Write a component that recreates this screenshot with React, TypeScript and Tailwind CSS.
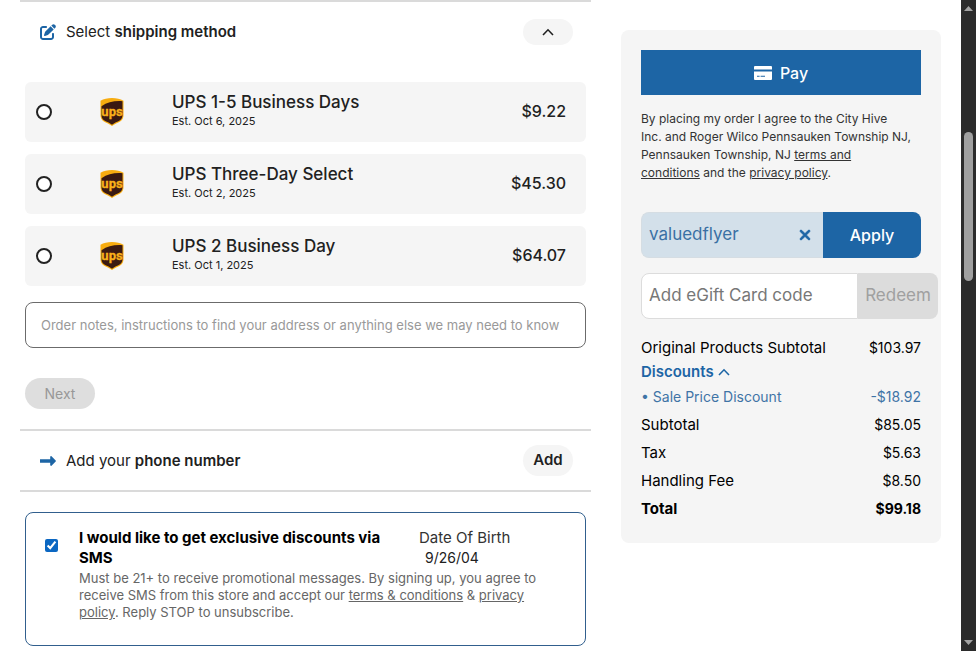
import { useState } from "react";
import { FaPenToSquare, FaXmark } from "react-icons/fa6";

// ── Data ───────────────────────────────────────────────

const SHIPPING_OPTIONS = [
  { id: "ground", name: "UPS 1-5 Business Days", estimate: "Est. Oct 6, 2025", price: "$9.22" },
  { id: "three-day", name: "UPS Three-Day Select", estimate: "Est. Oct 2, 2025", price: "$45.30" },
  { id: "two-day", name: "UPS 2 Business Day", estimate: "Est. Oct 1, 2025", price: "$64.07" },
];

const FEES = [
  { label: "Subtotal", amount: "$85.05" },
  { label: "Tax", amount: "$5.63" },
  { label: "Handling Fee", amount: "$8.50" },
];

// ── Icons ──────────────────────────────────────────────

function ChevronUp({ className }: { className: string }) {
  return (
    <svg viewBox="0 0 12 8" fill="none" stroke="currentColor" className={className} aria-hidden="true">
      <path d="M1 7 6 1.8 11 7" strokeWidth="1.6" />
    </svg>
  );
}

function ArrowRight({ className }: { className: string }) {
  return (
    <svg viewBox="0 0 16 16" fill="currentColor" className={className} aria-hidden="true">
      <path d="M.4 6.200h9.800V3.900c0-.7.8-1 1.300-.6l4.200 4.100c.3.300.3.900 0 1.200l-4.200 4.100c-.5.400-1.300.1-1.300-.6V9.800H.4a.4.4 0 0 1-.4-.4V6.600c0-.2.2-.4.4-.4Z" />
    </svg>
  );
}

function CardIcon() {
  return (
    <svg viewBox="0 0 18 14" className="h-3.5 w-[18px]" aria-hidden="true">
      <path fill="currentColor" d="M1 0h16a1 1 0 0 1 1 1v2.6H0V1a1 1 0 0 1 1-1Z" />
      <path
        fill="currentColor"
        fillRule="evenodd"
        d="M0 5.6h18V13a1 1 0 0 1-1 1H1a1 1 0 0 1-1-1Zm3 4.2v1h2.6v-1Zm3.6 0v1H11v-1Z"
      />
    </svg>
  );
}

function UpsLogo() {
  return (
    <svg viewBox="0 0 24 29" className="h-[29px] w-6" role="img" aria-label="UPS">
      <path
        fill="#f7ac10"
        d="M12 0C7.500 0 3.600.9.500 2.700V17c0 3 1 4.900 3.400 6.400C6.200 24.900 9.600 25.900 12 28c2.400-2.100 5.800-3.100 8.100-4.600 2.400-1.500 3.400-3.400 3.400-6.400V2.700C20.400.9 16.500 0 12 0Z"
      />
      <path
        fill="#3a1a12"
        d="M1.500 8.300C7.500 3.900 14.500 2.700 22.500 3.200V17c0 2.600-.9 4.200-2.900 5.500-2.100 1.400-5.200 2.200-7.600 4.200-2.400-2-5.500-2.800-7.600-4.200-2-1.300-2.900-2.900-2.900-5.500Z"
      />
      <text
        x="12"
        y="18"
        textAnchor="middle"
        fill="#f9b01a"
        stroke="#f9b01a"
        strokeWidth="0.3"
        fontFamily="Roboto, sans-serif"
        fontWeight="700"
        fontSize="13"
      >
        ups
      </text>
    </svg>
  );
}

// ── Shipping ───────────────────────────────────────────

function ShippingSection() {
  const [selected, setSelected] = useState("");

  return (
    <section className="border-t-2 border-[#dadada] pb-5">
      <div className="flex items-center py-[17px] pr-[18px] pl-5">
        <FaPenToSquare className="mr-2.5 size-4 text-[#1d65a5]" />
        <h2 className="flex-1 text-[15px] leading-5">
          Select <b className="font-semibold">shipping method</b>
        </h2>
        <button
          aria-label="Collapse shipping method"
          className="flex h-[26px] w-[50px] items-center justify-center rounded-full bg-[#f5f5f5]"
        >
          <ChevronUp className="h-2 w-3" />
        </button>
      </div>

      <div className="mx-[5px] mt-5 flex flex-col gap-3">
        {SHIPPING_OPTIONS.map((option) => (
          <label key={option.id} className="flex h-[60px] items-center rounded-md bg-[#f5f5f5] pr-5 pl-[11px]">
            <input
              type="radio"
              name="shipping"
              checked={selected === option.id}
              onChange={() => setSelected(option.id)}
              className="size-4 appearance-none rounded-full border-2 border-[#222] bg-white checked:border-4 checked:border-[#1d65a5]"
            />
            <span className="mx-12">
              <UpsLogo />
            </span>
            <span className="flex-1 pb-0.5">
              <span className="block text-[17px] leading-5 font-medium">{option.name}</span>
              <span className="block text-[11px] leading-[18px]">{option.estimate}</span>
            </span>
            <span className="pb-0.5 text-base leading-5 font-medium">{option.price}</span>
          </label>
        ))}
      </div>

      <div className="mx-[5px] mt-4">
        <input
          type="text"
          aria-label="Order notes"
          placeholder="Order notes, instructions to find your address or anything else we may need to know"
          className="block h-[46px] w-full rounded-lg border border-[#6b6b6b] bg-white px-[15px] text-[13px] placeholder:text-[#999]"
        />
        <button disabled className="mt-[30px] h-[31px] w-[70px] rounded-full bg-[#dedede] text-sm text-[#989898]">
          Next
        </button>
      </div>
    </section>
  );
}

function PhoneSection() {
  return (
    <section className="flex items-center border-y-2 border-[#dadada] py-3.5 pr-[18px] pl-5">
      <ArrowRight className="mr-2.5 size-4 text-[#1d65a5]" />
      <h2 className="flex-1 text-[15px] leading-5">
        Add your <b className="font-semibold">phone number</b>
      </h2>
      <button className="h-[31px] w-[50px] rounded-full bg-[#f5f5f5] text-[15px] font-semibold">Add</button>
    </section>
  );
}

function SmsConsent() {
  const [checked, setChecked] = useState(true);

  return (
    <section className="mx-[5px] mt-5 flex h-[134px] rounded-lg border border-[#315f8d] px-[19px] pt-[15px]">
      <input
        id="sms"
        type="checkbox"
        checked={checked}
        onChange={(e) => setChecked(e.target.checked)}
        className="mt-[11px] mr-[21px] size-[13px] shrink-0 accent-[#0b67c2]"
      />
      <div>
        <div className="flex">
          <label htmlFor="sms" className="w-[340px] pr-5 text-[15px] leading-5 font-bold text-black">
            I would like to get exclusive discounts via SMS
          </label>
          <div className="flex flex-col">
            <label htmlFor="dob" className="text-[15px] leading-5 text-[#333]">
              Date Of Birth
            </label>
            <input id="dob" type="text" defaultValue="9/26/04" className="h-5 w-24 px-1.5 text-sm leading-5" />
          </div>
        </div>
        <p className="mt-0.5 text-[13px] leading-[17px] text-[#666]">
          Must be 21+ to receive promotional messages. By signing up, you agree to receive SMS from this store and
          accept our{" "}
          <a href="#terms" className="underline">
            terms &amp; conditions
          </a>{" "}
          &amp;{" "}
          <a href="#privacy" className="underline">
            privacy policy
          </a>
          . Reply STOP to unsubscribe.
        </p>
      </div>
    </section>
  );
}

// ── Order summary ──────────────────────────────────────

function Totals() {
  const [open, setOpen] = useState(true);

  return (
    <table className="mt-4 w-full text-sm leading-5 text-black">
      <tbody>
        <tr className="h-[26px]">
          <th className="text-left text-[15px] font-normal">Original Products Subtotal</th>
          <td className="text-right">$103.97</td>
        </tr>
        <tr className="h-[22px]">
          <th colSpan={2} className="text-left">
            <button
              onClick={() => setOpen((v) => !v)}
              className="flex items-center gap-1 text-[15px] font-semibold text-[#1d65a5]"
            >
              Discounts <ChevronUp className="h-2 w-3" />
            </button>
          </th>
        </tr>
        {open && (
          <tr className="h-7 text-[#3f74a6]">
            <th className="text-left font-normal">• Sale Price Discount</th>
            <td className="text-right">-$18.92</td>
          </tr>
        )}
        {FEES.map((fee) => (
          <tr key={fee.label} className="h-7">
            <th className="text-left text-[15px] font-normal">{fee.label}</th>
            <td className="text-right">{fee.amount}</td>
          </tr>
        ))}
        <tr className="h-7 font-bold">
          <th className="text-left text-[15px]">Total</th>
          <td className="text-right">$99.18</td>
        </tr>
      </tbody>
    </table>
  );
}

function OrderSummary() {
  const [coupon, setCoupon] = useState("valuedflyer");

  return (
    <aside className="mt-[30px] w-80 shrink-0 self-start rounded-lg bg-[#f5f5f5] p-5">
      <button className="flex h-[45px] w-full items-center justify-center gap-2 bg-[#1d65a5] text-base font-medium text-white">
        <CardIcon />
        Pay
      </button>
      <p className="mt-[15px] text-xs leading-[18px] text-[#333]">
        By placing my order I agree to the City Hive
        <br />
        Inc. and Roger Wilco Pennsauken Township NJ,
        <br />
        Pennsauken Township, NJ{" "}
        <a href="#terms" className="underline">
          terms and
          <br />
          conditions
        </a>{" "}
        and the{" "}
        <a href="#privacy" className="underline">
          privacy policy
        </a>
        .
      </p>

      <div className="mt-[30px] flex h-[46px]">
        <div className="flex min-w-0 flex-1 items-center rounded-l-lg border border-r-0 border-[#d5dde3] bg-[#d3e0ea] pr-2.5 pl-[7px]">
          <input
            type="text"
            aria-label="Coupon code"
            value={coupon}
            onChange={(e) => setCoupon(e.target.value)}
            className="min-w-0 flex-1 bg-transparent text-[17px] text-[#3a70a4]"
          />
          <button aria-label="Clear coupon" onClick={() => setCoupon("")} className="text-[#1d65a5]">
            <FaXmark className="size-4 stroke-current stroke-[24px]" />
          </button>
        </div>
        <button className="w-[98px] rounded-r-lg bg-[#1d65a5] text-base font-medium text-white">Apply</button>
      </div>

      <div className="mt-[15px] -mr-[17px] flex h-[46px]">
        <input
          type="text"
          aria-label="eGift Card code"
          placeholder="Add eGift Card code"
          className="min-w-0 flex-1 rounded-l-lg border border-[#dcdcdc] bg-white px-[7px] text-[17px] placeholder:text-[#777]"
        />
        <button disabled className="w-20 rounded-r-lg bg-[#dcdcdc] text-[17px] text-[#a0a0a0]">
          Redeem
        </button>
      </div>

      <Totals />
    </aside>
  );
}

// ── Scroll rail ────────────────────────────────────────

function ScrollRail() {
  return (
    <div className="sticky top-0 flex h-screen w-[15px] shrink-0 flex-col items-center bg-[#2b2b2b] py-1.5 text-[#a3a3a3]">
      <svg viewBox="0 0 9 5" className="h-[5px] w-[9px]" aria-hidden="true">
        <path fill="currentColor" d="M0 5 4.500 0 9 5Z" />
      </svg>
      <div className="flex-[121]" />
      <div className="w-[9px] flex-[149] rounded-full bg-[#9f9f9f]" />
      <div className="flex-[359]" />
      <svg viewBox="0 0 9 5" className="h-[5px] w-[9px]" aria-hidden="true">
        <path fill="currentColor" d="M0 0 4.500 5 9 0Z" />
      </svg>
    </div>
  );
}

export default function App() {
  return (
    <div className="flex min-h-screen bg-white font-['Inter',sans-serif] text-[#212121]">
      <div className="flex min-w-0 flex-1 gap-[30px] px-5">
        <main className="min-w-0 flex-1">
          <ShippingSection />
          <PhoneSection />
          <SmsConsent />
        </main>
        <OrderSummary />
      </div>
      <ScrollRail />
    </div>
  );
}
